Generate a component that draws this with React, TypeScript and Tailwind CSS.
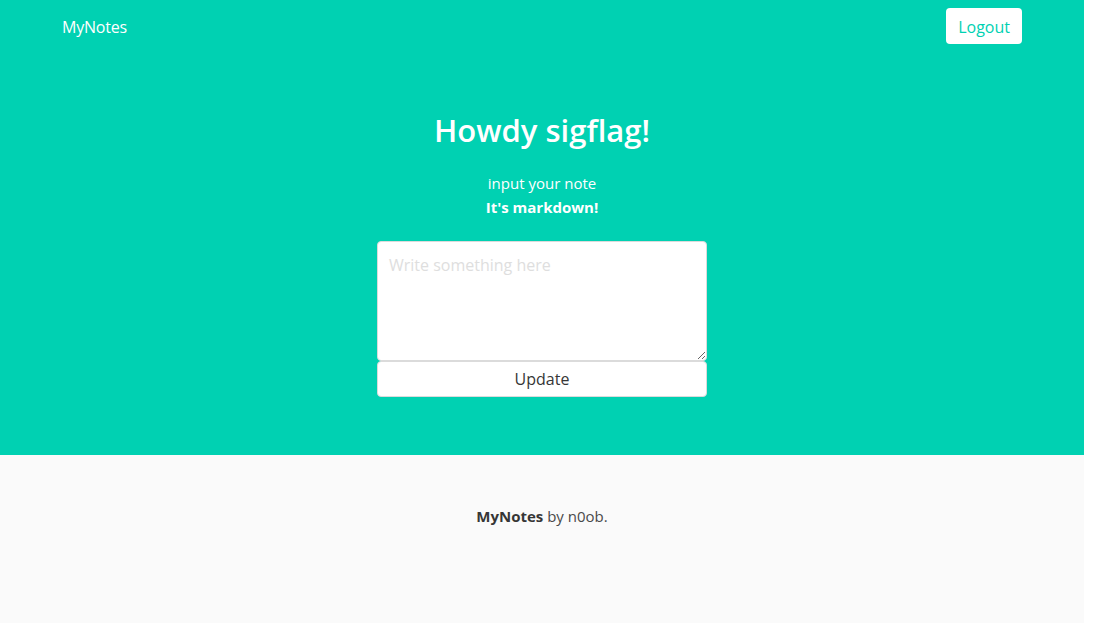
import React from "react";

export default function App() {
  return (
    <div className="w-[1096px] h-[623px] bg-white overflow-hidden" style={{ fontFamily: '"Open Sans", "Noto Sans", sans-serif' }}>
      <div className="w-[1084px] h-[623px] flex flex-col">
        <section className="bg-[#00d1b2] h-[455px] flex flex-col">
          <nav className="h-[54px] flex items-center justify-between px-[62px]">
            <span className="text-white text-[16px] tracking-[-0.2px]">MyNotes</span>
            <button className="bg-white text-[#00d1b2] text-[16px] h-[36px] px-[12px] pt-[2px] rounded-[4px] -mt-[2px]">Logout</button>
          </nav>
          <div className="flex flex-col items-center pt-[56px]">
            <h1 className="text-white text-[31px] font-semibold leading-[40px]">Howdy sigflag!</h1>
            <p className="text-white text-[15px] mt-[21px] leading-[24px]">input your note</p>
            <p className="text-white text-[15px] font-bold leading-[24px]">It's markdown!</p>
            <div className="mt-[22px] w-[330px] flex flex-col">
              <textarea
                placeholder="Write something here"
                className="w-[330px] h-[120px] bg-white rounded-[4px] border border-[#dbdbdb] px-[11px] py-[11px] text-[16px] text-[#363636] placeholder:text-[#dedede] outline-none resize-y leading-[24px]"
              />
              <button className="w-[330px] h-[36px] bg-white rounded-[4px] border border-[#dbdbdb] text-[16px] text-[#363636]">Update</button>
            </div>
          </div>
        </section>
        <footer className="flex-1 bg-[#fafafa] flex justify-center pt-[49px]">
          <p className="text-[15px] text-[#4a4a4a] leading-[24px]">
            <strong className="text-[#363636] font-bold">MyNotes</strong> by n0ob.
          </p>
        </footer>
      </div>
    </div>
  );
}
